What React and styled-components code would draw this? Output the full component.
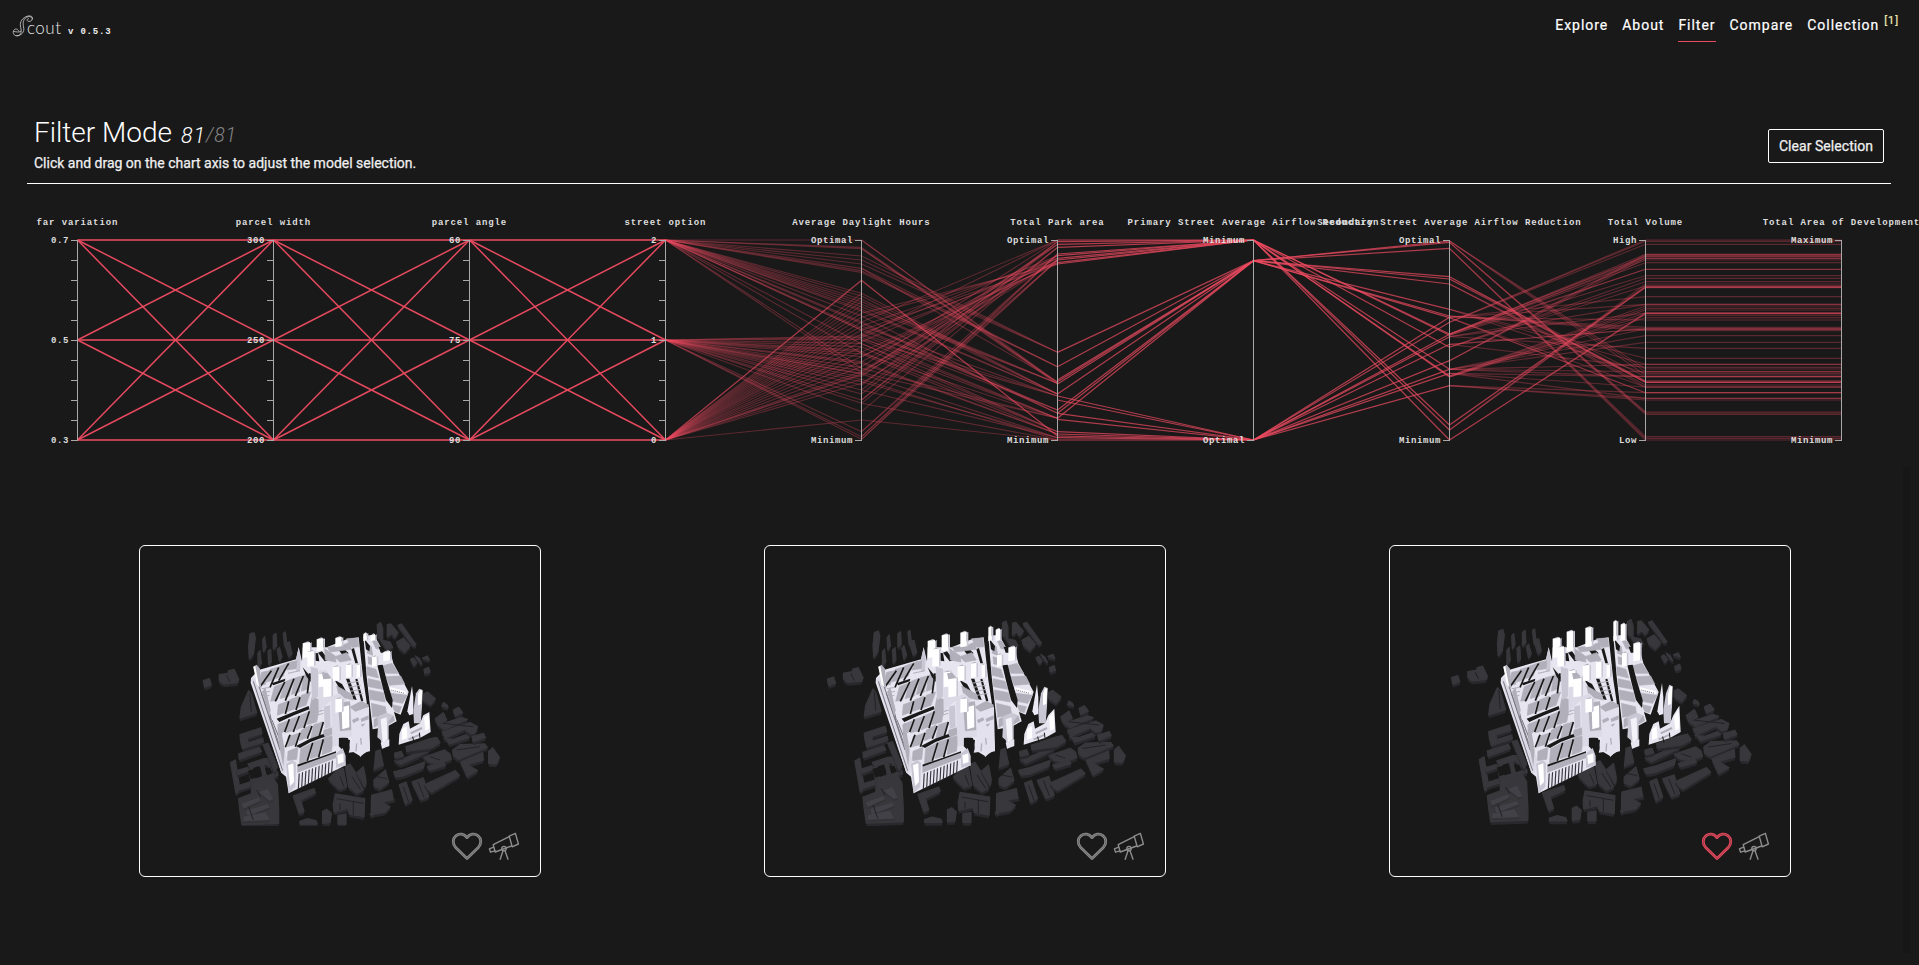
import React from "react";
import styled, { createGlobalStyle } from "styled-components";

const GlobalStyle = createGlobalStyle`
  html, body { margin: 0; padding: 0; background: #191919; }
  body { width: 1919px; height: 965px; overflow: hidden; color: #fff; font-family: Roboto, sans-serif; }
  * { box-sizing: border-box; }
`;

const Page = styled.div`
  display: flex;
  flex-direction: column;
  width: 1919px;
  height: 965px;
  overflow: hidden;
  background: #191919;
`;

const TopBar = styled.header`
  display: flex;
  justify-content: space-between;
  height: 116px;
  padding: 11px 20px 0 12px;
`;

const Brand = styled.div`
  display: flex;
  align-items: flex-start;
`;

const BrandMark = styled.svg`
  width: 22px;
  height: 28px;
  overflow: visible;
`;

const BrandName = styled.span`
  margin: 6px 0 0 -7px;
  width: 36px;
  font: 300 17px/22px Lato, sans-serif;
  letter-spacing: 0.5px;
  color: #e6e6e6;
`;

const Version = styled.span`
  margin: 13px 0 0 5px;
  font: bold 9px/16px "Liberation Mono", monospace;
  letter-spacing: 0.8px;
  color: #eee;
`;

const Nav = styled.nav`
  display: flex;
  align-items: flex-start;
  gap: 14px;
`;

const NavItem = styled.a`
  height: 31px;
  font-size: 14px;
  line-height: 28px;
  letter-spacing: 0.97px;
  font-weight: 400;
  color: #fff;
  -webkit-text-stroke: 0.2px #fff;
  border-bottom: 1px solid ${(p) => (p.$active ? "#e84a5f" : "transparent")};
`;

const Count = styled.sup`
  margin-left: 5px;
  font-size: 11px;
  line-height: 0;
  letter-spacing: 0.9px;
  color: #f3eab5;
  -webkit-text-stroke: 0.2px #f3eab5;
`;

const Heading = styled.section`
  display: flex;
  justify-content: space-between;
  height: 68px;
  margin: 0 28px 0 27px;
  padding: 0 7px;
  border-bottom: 1px solid #fff;
`;

const Title = styled.h1`
  display: flex;
  align-items: baseline;
  margin: 0;
  height: 37px;
  font-size: 28px;
  line-height: 33px;
  font-weight: 300;
`;

const Selected = styled.em`
  margin-left: 9px;
  padding-top: 1px;
  align-self: flex-start;
  line-height: 37px;
  font-size: 21.5px;
  letter-spacing: 0.9px;
`;

const Total = styled(Selected)`
  margin-left: 0;
  font-size: 19.5px;
  letter-spacing: 0.7px;
  color: #858585;
`;

const Hint = styled.p`
  margin: 0;
  font-size: 14px;
  line-height: 20px;
  font-weight: 400;
  color: #f0f0f0;
  -webkit-text-stroke: 0.25px #f0f0f0;
`;

const ClearButton = styled.button`
  width: 116px;
  height: 34px;
  margin-top: 13px;
  padding: 0;
  font: 400 14px/30px Roboto, sans-serif;
  letter-spacing: 0.05px;
  color: #f0f0f0;
  -webkit-text-stroke: 0.25px #f0f0f0;
  background: transparent;
  border: 1px solid #fff;
  border-radius: 2px;
`;

const Chart = styled.svg`
  display: block;
  width: 1919px;
  height: 283px;
  flex: none;
`;

const AxisTitle = styled.text`
  font: bold 9px "Liberation Mono", monospace;
  letter-spacing: 0.89px;
  fill: #dedede;
`;

const TickLabel = styled(AxisTitle)`
  letter-spacing: 0.6px;
`;

const Gallery = styled.main`
  display: grid;
  grid-template-columns: repeat(3, 625px);
  justify-items: center;
  height: 486px;
  margin: 0 9px 0 27px;
  padding-top: 78px;
  position: relative;
`;

const ScrollTrack = styled.div`
  position: absolute;
  right: 0;
  top: 0;
  width: 7px;
  height: 486px;
  background: #161616;
`;

const Card = styled.article`
  display: flex;
  flex-direction: column;
  width: 402px;
  height: 332px;
  padding: 64px 20px 0 50px;
  border: 1px solid #fff;
  border-radius: 6px;
`;

const Model = styled.svg`
  width: 320px;
  height: 216px;
  flex: none;
`;

const Actions = styled.div`
  display: flex;
  align-self: flex-end;
  margin-top: 4px;
  gap: 5px;
`;

const Icon = styled.svg`
  width: 32px;
  height: 32px;
  fill: none;
  stroke: ${(p) => p.$color || "#8d8d8d"};
`;

/* ---------- parallel coordinates ---------- */

const AXIS_X = [77, 273, 469, 665, 861, 1057, 1253, 1449, 1645, 1841];
const AXES = [
  { name: "far variation", top: "0.7", mid: "0.5", low: "0.3" },
  { name: "parcel width", top: "300", mid: "250", low: "200" },
  { name: "parcel angle", top: "60", mid: "75", low: "90" },
  { name: "street option", top: "2", mid: "1", low: "0" },
  { name: "Average Daylight Hours", top: "Optimal", low: "Minimum" },
  { name: "Total Park area", top: "Optimal", low: "Minimum" },
  { name: "Primary Street Average Airflow Reduction", top: "Minimum", low: "Optimal" },
  { name: "Secondary Street Average Airflow Reduction", top: "Optimal", low: "Minimum" },
  { name: "Total Volume", top: "High", low: "Low" },
  { name: "Total Area of Development", top: "Maximum", low: "Minimum" },
];

// Positions below run from 0 (top of an axis) to 600 (bottom); [from, to, overlapping models].
const factorLinks = [0, 300, 600].flatMap((a) => [0, 300, 600].map((b) => [a, b, 9]));

const daylight = {
  0: [0, 22, 26, 48, 60, 72, 85, 92, 97, 160, 168, 178, 185, 193, 200, 208, 213, 228, 245, 250, 265, 270, 270, 312, 340, 385, 398],
  300: [288, 292, 298, 310, 320, 335, 342, 350, 365, 370, 382, 392, 400, 402, 410, 418, 425, 435, 450, 462, 480, 490, 515, 575, 590, 598, 330],
  600: [120, 121, 122, 160, 172, 185, 196, 208, 220, 232, 246, 258, 270, 282, 292, 305, 320, 336, 350, 365, 380, 395, 402, 405, 418, 430, 540],
};
const daylightLinks = Object.entries(daylight).flatMap(([k, v]) => v.map((d) => [Number(k), d, 1]));

const parkLinks = [
  [[0, 22, 26], 427], [[0, 26], 432], [[48, 60, 72], 337], [[85, 92, 97], 380], [[85], 425],
  [[120, 121, 122], 588], [[160, 168, 178], 462], [[185, 193, 200], 430], [[208, 213], 462],
  [[228, 245, 250], 520], [[265, 270, 285], 510], [[292, 300, 312], 535], [[340, 385, 398], 535],
  [[310, 320, 335], 575], [[342, 365, 370], 582], [[402, 425, 450], 593], [[540, 490, 418], 600],
  [[575, 590, 598], 60], [[575, 590, 598], 42], [[435, 462, 480], 5], [[400, 410, 450], 13],
  [[480, 490, 515], 22], [[282, 350, 392], 47], [[258, 305, 365], 55], [[232, 292, 350], 68],
  [[220, 270, 336], 72], [[246, 288, 380], 0], [[395, 405, 430], 60], [[258, 282, 298], 468],
].flatMap(([from, to]) => from.map((f) => [f, to, 1]));

const airflowLinks = [
  ...[337, 380, 420, 425, 432, 462, 510, 520, 535].map((p) => [p, 62, 3]),
  ...[0, 5, 13, 22, 42, 47, 55, 60, 68, 72].map((p) => [p, 0, 3]),
  ...[468, 480, 520, 538, 575, 582, 588, 593, 600].map((p) => [p, 600, 3]),
];

const secondaryLinks = [
  ...[3, 7, 25, 110, 117, 132, 208, 228, 233].map((s) => [62, s, 3]),
  ...[282, 286, 322, 388, 408, 411, 555, 570, 600].map((s) => [0, s, 3]),
  ...[247, 232, 283, 290, 313, 362, 388, 400, 437].map((s) => [600, s, 3]),
];

const volumeLinks = [
  [3, [387, 395, 405]], [7, [516, 519, 523]], [25, [590, 595, 600]],
  [110, [423, 427, 427]], [117, [423, 427, 410]], [132, [427, 435, 441]],
  [208, [355, 373, 400]], [228, [262, 267, 272]], [233, [441, 458, 458]],
  [282, [48, 50, 88]], [286, [55, 88, 107]], [322, [115, 125, 138]],
  [388, [267, 287, 307]], [408, [198, 205, 226]], [411, [210, 219, 233]],
  [555, [140, 142, 143]], [570, [132, 138, 142]], [600, [219, 220, 221]],
  [247, [0, 4, 13]], [232, [170, 193, 240]], [283, [43, 60, 68]],
  [290, [193, 219, 325]], [313, [267, 267, 382]], [362, [43, 47, 55]],
  [388, [395, 410, 373]], [400, [410, 441, 475]], [437, [458, 475, 480]],
].flatMap(([s, v]) => v.map((x) => [s, x, 1]));

const areaLinks = volumeLinks.map(([, v]) => [v, v, 1]);

const SEGMENTS = [
  factorLinks, factorLinks, factorLinks, daylightLinks, parkLinks, airflowLinks, secondaryLinks, volumeLinks, areaLinks,
];

const toY = (v) => 56 + v / 3;

function lineStyle(a, b, n) {
  if (n === 9) return a === b ? { strokeWidth: 2, opacity: 0.76 } : { strokeWidth: 1.5, opacity: 0.95 };
  if (n === 3) return { strokeWidth: 1.2, opacity: 0.7 };
  return { strokeWidth: 1.1, opacity: 0.31 };
}

function Axis({ x, name, top, mid, low }) {
  const ticks = mid ? Array.from({ length: 11 }, (_, i) => i * 60) : [0, 600];
  const label = (v, t) => (
    <TickLabel x={x - 8} y={toY(v) + 3} textAnchor="end">{t}</TickLabel>
  );
  return (
    <g>
      <g stroke="#a8a8a8" strokeWidth="1">
        <path d={`M${x + 0.5} 56V257`} />
        {ticks.map((t) => <path key={t} d={`M${x - 6} ${toY(t) + 0.5}H${x + 1}`} />)}
      </g>
      <AxisTitle x={x + 0.4} y="41" textAnchor="middle">{name}</AxisTitle>
      {label(0, top)}
      {mid && label(300, mid)}
      {label(600, low)}
    </g>
  );
}

function ParallelChart() {
  return (
    <Chart viewBox="0 0 1919 283">
      <g stroke="#f04c62">
        {SEGMENTS.map((links, s) =>
          links.map(([a, b, n], i) => (
            <line
              key={`${s}-${i}`}
              x1={AXIS_X[s] + 0.5}
              x2={AXIS_X[s + 1] + 0.5}
              y1={toY(a)}
              y2={toY(b)}
              {...lineStyle(a, b, n)}
            />
          ))
        )}
      </g>
      {AXES.map((a, i) => <Axis key={a.name} x={AXIS_X[i]} {...a} />)}
    </Chart>
  );
}

/* ---------- city model ---------- */

const parse = (s) => s.split(" ").map((p) => p.split(",").map(Number));
const str = (pts) => pts.map((p) => p.join(",")).join(" ");

function Block({ pts, h = 8, top, side, grow = 0 }) {
  const p = parse(pts);
  return (
    <g strokeLinejoin="round">
      {p.map((a, i) => {
        const b = p[(i + 1) % p.length];
        return <polygon key={i} fill={side} points={str([a, b, [b[0], b[1] + h], [a[0], a[1] + h]])} />;
      })}
      <polygon fill={top} stroke={top} strokeWidth={grow} points={pts} />
    </g>
  );
}

const CONTEXT = [
  "180,72 192,68 196,84 190,132 178,146 176,110", "218,88 224,80 228,112 220,124", "250,76 258,70 260,108 250,116",
  "280,70 286,66 290,100 284,110", "204,130 210,122 214,160 204,172", "234,124 242,118 244,156 236,164",
  "262,120 268,112 276,140 268,152", "284,100 298,96 306,132 296,140",
  "40,212 58,206 64,224 44,232", "88,194 114,190 116,182 132,178 146,208 142,218 100,222 88,212",
  "176,242 184,252 200,308 150,324 154,292",
  "150,374 212,354 216,370 172,384 174,398 218,384 220,396 158,416 152,394", "146,432 208,412 214,424 148,448",
  "122,458 136,450 150,540 138,550", "140,482 174,472 176,482 144,494", "174,462 222,446 248,446 256,474 240,480 232,462 184,478",
  "148,526 180,516 184,528 146,540", "176,478 188,476 196,512 184,520", "212,466 220,464 230,500 220,506", "190,510 262,486 264,496 194,522",
  "220,404 234,400 262,470 254,486",
  "146,566 184,552 186,520 250,504 262,524 266,600 266,640 156,644 150,604",
  "310,558 372,536 376,548 332,570 342,604 328,610", "330,634 352,626 378,632 382,642 330,642", "398,604 410,598 424,610 420,638 398,640",
  "444,616 468,612 468,642 444,642",
  "436,552 524,566 522,620 478,612 474,596 432,606 430,582",
  "416,506 444,478 460,476 470,530 448,538 436,528", "466,468 480,462 494,484 520,540 500,550 476,530", "500,488 520,470 530,520 524,530",
  "540,430 570,420 580,466 550,478", "552,510 586,480 596,516 570,536 552,528",
  "544,556 606,540 614,568 574,576 600,590 586,606 544,614",
  "610,486 642,478 704,456 700,474 640,498 618,500", "700,442 764,420 780,432 784,448 744,462 716,456",
  "614,452 640,446 700,420 698,408 720,404 716,424 632,464", "648,410 720,386 740,382 750,398 724,414 650,424",
  "628,524 648,516 666,570 646,582", "666,516 700,504 716,560 692,570", "704,524 796,482 808,496 726,546 716,540",
  "736,326 760,308 770,330 744,344", "746,346 814,322 832,328 764,358", "756,366 840,338 862,350 856,368 842,372 824,358 762,386 790,388 828,374 838,382 778,402",
  "788,420 810,404 884,402 892,412 806,448 790,438", "846,380 880,370 886,382 850,396", "812,456 878,428 880,450 832,464 862,482 832,500",
  "896,424 908,414 928,442 920,462 896,460", "760,278 770,284 774,292 756,288", "700,252 712,246 736,266 722,284 700,270",
  "790,300 806,292 818,308 796,318", "698,144 712,138 718,150", "702,178 716,172 720,186 704,190",
  "662,148 670,144 680,158 672,166", "676,138 688,146 696,162 690,158",
  "624,46 634,42 678,104 670,108", "592,44 602,42 624,68 614,82 604,70 592,80", "620,96 640,84 660,108 644,126 626,112",
  "562,44 572,38 578,56 578,88 564,84", "572,90 600,96 608,112 590,118", "540,612 548,610 548,618",
  "612,430 634,424 640,438 616,444", "712,470 760,456 766,466 720,480",
];

const CUTS = [
  "174,482 194,476 200,502 182,508", "190,474 208,468 214,488 196,492", "226,476 240,472 246,490 232,496",
];

const BRIGHT_CONTEXT = [
  "154,582 206,562 212,572 160,596", "168,602 232,582 240,592 172,618", "206,546 234,536 250,568 238,572", "160,620 226,606 240,630 160,634",
];

const ROOFS = [
  "215,187 237,182 226,224 206,224", "240,178 262,172 250,210 230,216", "267,169 292,160 280,198 256,206", "297,157 320,152 318,176 290,180",
  "253,230 278,220 262,270 242,274", "284,216 308,206 298,258 270,266", "314,204 336,198 328,246 304,254", "340,196 360,190 356,236 334,244",
  "265,284 292,274 282,308 262,316", "298,270 328,258 316,296 288,306", "334,256 362,246 348,286 322,294", "366,262 392,270 392,304 356,312",
  "268,342 292,332 284,362 276,370", "300,328 323,320 312,362 286,368", "330,316 354,306 342,350 318,360", "360,302 388,294 380,336 350,344",
  "294,380 326,370 314,404 292,410", "334,360 363,344 352,382 328,392", "371,344 398,336 388,376 362,386", "402,360 430,352 430,372 398,384",
  "294,424 324,412 320,448 292,452", "332,416 364,400 352,452 328,464", "370,396 396,388 386,438 360,446", "402,384 432,376 424,424 396,434",
];

const RIGHT_ROOFS = [
  "530,170 558,178 566,204 532,196", "534,206 570,214 578,238 536,230", "538,240 580,248 586,276 540,268",
  "544,280 586,290 590,314 548,322", "576,168 606,160 626,190 588,190", "588,200 632,198 644,222 598,226",
  "602,250 652,256 638,280 606,274", "606,284 634,290 628,308 614,304", "546,90 562,94 574,118 558,116",
  "412,112 452,108 480,96 484,118 420,126", "434,140 470,128 484,150 450,156", "470,86 504,84 506,110 486,112",
  "440,228 484,252 490,270 448,260", "404,116 436,138 438,156 406,150", "566,320 610,318 614,332 590,346 566,344",
  "530,100 544,110 548,136 532,130", "534,140 548,144 552,164 536,162", "552,328 562,322 564,346 552,352",
];

const GAPS = [
  "244,182 212,228", "266,172 240,232", "296,160 266,212", "284,216 256,274", "312,206 286,272", "340,198 316,258",
  "360,190 352,250", "296,274 286,312", "330,262 318,300", "328,318 310,366", "358,304 342,354", "330,368 316,410",
  "366,348 352,386", "400,336 388,378", "368,398 352,452", "400,388 386,442", "300,374 286,412", "298,328 284,366",
];

// x, y, width, height of the lit face, and how far the tower grows with the floor area ratio
const TOWERS = [
  [338, 100, 22, 44, 0.6], [380, 88, 20, 36, 1], [436, 84, 19, 28, 1.3], [352, 126, 20, 44, 0.6], [520, 72, 10, 22, 1.6],
  [542, 76, 13, 18, 1.4], [580, 126, 20, 28, 1.1], [546, 142, 14, 28, 0.5], [428, 172, 20, 42, 0.2], [468, 166, 16, 38, 0.4],
  [500, 166, 10, 38, 0], [386, 192, 20, 40, 0.4], [400, 208, 24, 54, 0.3], [436, 268, 20, 40, 0],
];

function City({ lift }) {
  const wall = "#e7e5f0";
  const roof = "#b0afba";
  const shade = "#c9c7d4";
  const dark = "#191919";
  const spread = 1 + lift * 0.0005;
  return (
    <Model viewBox="0 0 960 648">
      <g transform={`translate(${480 * (1 - spread)} ${-lift * 0.4}) scale(${spread} 1)`}>
        {CONTEXT.map((p) => <Block key={p} pts={p} h={10} grow={4} top="#38373b" side="#29282c" />)}
        {CUTS.map((p) => <polygon key={p} points={p} fill={dark} />)}
        {BRIGHT_CONTEXT.map((p) => <Block key={p} pts={p} h={6} top="#424148" side="#333237" />)}
        <g stroke="#232225" strokeWidth="3">
          <path d="M440 566L520 580M450 580V600M490 574V614M640 530L656 576M684 516L702 562M560 500L590 506M450 500L462 530M486 500L512 540M640 470L700 448M760 340L850 350M800 420L870 410M720 440L750 450M180 250L184 306M110 196L120 216M200 540L212 560M176 590L190 630" />
        </g>
      </g>

      <polygon fill={dark} points="500,84 524,84 556,420 534,648 524,648 534,430" />
      <polygon fill={dark} points="596,410 616,400 606,470 624,560 612,570 594,470" />

      <polygon
        fill={wall}
        points="183,204 206,180 318,148 326,112 336,154 338,112 410,112 470,88 506,82 520,210 530,276 540,420 510,438 480,420 474,384 446,380 446,408 462,426 467,466 296,550 288,500 274,488 182,218"
      />
      <polygon fill={shade} points="326,112 332,146 330,184 318,182 318,150" />
      <g fill={roof} stroke={roof} strokeWidth="2">
        {ROOFS.map((p) => <polygon key={p} points={p} />)}
      </g>
      <g stroke={dark} strokeWidth="5">
        {GAPS.map((g) => <path key={g} d={`M${g.replace(" ", "L")}`} />)}
      </g>
      <g fill={dark}>
        <polygon points="260,326 310,306 356,288 358,298 312,316 268,336" />
        <polygon points="318,408 360,386 400,372 404,380 362,396 330,414" />
        <polygon points="244,220 286,206 284,214 250,226" />
        <polygon points="322,464 392,440 438,424 438,430 390,450 324,472" />
        <polygon points="338,172 362,200 362,216 350,200" />
        <polygon points="384,128 396,124 416,150 404,154" />
        <polygon points="434,210 456,222 478,262 462,260" />
        <polygon points="468,206 478,206 500,270 490,268" />
        <polygon points="496,208 502,206 520,272 514,276" />
        <polygon points="372,128 384,130 388,154 376,152" />
        <polygon points="446,120 462,116 476,130 458,136" />
        <polygon points="484,118 492,114 504,160 496,160" />
        <polygon points="446,384 480,390 476,430 464,424 458,402" />
      </g>
      <g stroke={roof} strokeWidth="3">
        <path d="M470 220L506 214M474 232L512 226M480 244L514 238M486 256L518 250M216 236L240 232M220 248L240 244M224 260L238 256M404 400L430 390M404 412L428 402M292 172L320 166M294 190L330 182M366 320L400 310M380 306L402 300" />
      </g>
      <g stroke="#34333a" strokeWidth="3.4">
        {Array.from({ length: 11 }, (_, i) => (
          <path key={i} d={`M${328 + i * 10} ${484 - i * 4.6}L${325 + i * 10} ${538 - i * 5}`} />
        ))}
      </g>
      <polygon fill={roof} points="322,470 438,428 438,446 322,490" />
      <polygon fill={wall} points="322,488 438,444 438,448 322,493" />

      <polygon fill="#dcdae6" points="183,206 200,200 236,310 272,390 292,450 284,490 274,488" />
      <g stroke="#77767f" strokeWidth="3" fill="none">
        <path d="M190 214L278 482M206 226L280 440M222 240L244 330M246 330L274 400M214 250L270 420" />
      </g>
      <polygon fill={roof} points="190,170 200,164 210,176 214,238 204,226" />
      <polygon fill="#fff" points="190,170 196,168 208,232 200,222" />
      <polygon fill={roof} points="216,246 226,232 242,300 238,320" />
      <polygon fill={roof} points="262,344 270,338 284,420 280,470 266,400" />
      <polygon fill={shade} points="288,462 306,450 318,458 316,530 296,550" />
      <polygon fill="#fff" points="294,466 310,460 312,516 300,528" />
      <polygon fill={shade} points="438,430 458,414 467,438 467,466 438,474" />
      <polygon fill="#fff" points="442,436 460,430 461,456 444,462" />

      <polygon fill={wall} points="520,78 552,74 580,126 602,128 610,160 656,246 632,314 612,306 620,334 590,350 548,358 530,200" />
      <g fill={roof} stroke={roof} strokeWidth="2">
        {RIGHT_ROOFS.map((p) => <polygon key={p} points={p} />)}
      </g>
      <polygon fill={dark} points="562,166 578,164 590,210 608,270 606,294 588,270 574,216" />
      <polygon fill={dark} points="524,88 540,108 538,124 528,118" />
      <polygon fill={dark} points="566,110 578,112 584,128 572,128" />
      <path d="M600 236L648 248" stroke="#fff" strokeWidth="8" />
      <path d="M604 240L644 250" stroke="#85848f" strokeWidth="3" strokeDasharray="3 3" />

      <polygon fill={shade} points="362,170 384,176 384,260 366,270" />
      <polygon fill="#dcdae6" points="384,182 410,180 428,260 424,270 402,290 386,306" />
      <polygon fill={shade} points="402,290 420,286 422,352 404,356" />
      <polygon fill="#dcdae6" points="422,262 448,250 484,284 486,380 446,384 446,406 428,410" />
      <polygon fill={roof} points="444,280 480,274 484,360 450,364" />
      <polygon fill="#fff" points="455,292 477,286 478,352 457,358" />
      <polygon fill={roof} points="480,290 514,272 536,284 536,292 496,306 484,296" />
      <polygon fill="#e3e1ed" points="484,296 496,306 537,290 540,424 526,426 510,442 508,424 476,428 486,390" />
      <polygon fill={roof} points="486,330 504,322 508,330 490,340" />
      <polygon fill={roof} points="512,326 536,316 536,328 514,336" />
      <polygon fill={roof} points="512,344 526,340 518,350" />
      <path d="M500 400L498 424M512 384L514 404" stroke={roof} strokeWidth="4" />

      {TOWERS.map(([x, y, w, h, k]) => {
        const t = y - lift * k;
        return (
          <g key={`${x}-${y}`}>
            <polygon fill={roof} points={`${x},${t} ${x + w * 0.7},${t - 6} ${x + w},${t - 3} ${x + w},${t + 2}`} />
            <polygon fill={shade} points={`${x + w},${t} ${x + w + 5},${t - 3} ${x + w + 5},${y + h - 4} ${x + w},${y + h - 2}`} />
            <polygon fill="#fff" points={`${x},${t} ${x + w},${t - 3} ${x + w},${y + h - 3} ${x},${y + h}`} />
          </g>
        );
      })}
      <polygon fill={roof} points="396,190 412,188 424,204 400,208" />

      <polygon fill={shade} points="566,318 590,308 610,316 596,334 596,402 578,416 572,390 562,382" />
      <polygon fill="#f3f2f9" points="572,328 590,322 592,388 578,398" />
      <polygon fill={wall} points="572,398 598,388 598,408 576,416" />
      <polygon fill="#eceaf4" points={`652,304 666,${228 - lift * 0.4} 670,262 670,312 658,316`} />
      <polygon fill={shade} points={`678,250 688,${236 - lift * 0.5} 698,${240 - lift * 0.5} 696,290 692,340 672,340 670,300`} />
      <polygon fill="#fff" points={`684,252 690,${240 - lift * 0.5} 697,${242 - lift * 0.5} 694,282 684,286`} />
      <polygon fill={wall} points={`628,372 640,342 656,334 660,356 690,340 700,316 718,${306 - lift * 0.8} 722,366 690,384 626,404`} />
      <polygon fill="#fff" points={`702,322 716,${312 - lift * 0.7} 718,356 706,362`} />
      <polygon fill="#fff" points="636,358 650,348 652,384 636,390" />
      <path d="M662 370L696 354M656 388L690 374" stroke={roof} strokeWidth="6" />
      <path d="M668 380L672 398M688 368L690 384" stroke={dark} strokeWidth="3" />
    </Model>
  );
}

function Heart({ color }) {
  const d = "M16 28.6 4.7 17.4C1.2 13.8 1.6 8.6 4.9 5.8 8.5 2.9 13.3 3.9 16 7.6 18.7 3.9 23.5 2.9 27.1 5.8 30.4 8.6 30.8 13.8 27.3 17.4Z";
  return (
    <Icon viewBox="0 0 32 32" $color={color}>
      <path d={d} strokeWidth="2.8" strokeLinejoin="round" />
      <path d={d} strokeWidth="0.8" stroke="#191919" opacity="0.45" />
    </Icon>
  );
}

function Telescope() {
  return (
    <Icon viewBox="0 0 32 32">
      <g strokeWidth="1.4" strokeLinejoin="round" strokeLinecap="round">
        <path d="M21.2 6.1 27.4 3.4 30.4 14 24.2 16.8Z" />
        <path d="M21.2 6.6 5.2 14.6 7.2 22 23.6 16" />
        <path d="M5.6 17.2 1.4 18.8 2.6 22.2 6.8 20.8" />
        <circle cx="16" cy="18.6" r="2.2" />
        <path d="M15 20.8 12.2 29.2M17 20.8 20 29.2" />
      </g>
    </Icon>
  );
}

const NAV = ["Explore", "About", "Filter", "Compare", "Collection"];
const CARDS = [
  { id: "a", lift: 0, liked: false },
  { id: "b", lift: 12, liked: false },
  { id: "c", lift: 23, liked: true },
];

export default function App() {
  return (
    <Page>
      <GlobalStyle />
      <TopBar>
        <Brand>
          <BrandMark viewBox="0 0 22 28" fill="none" stroke="#cfcfcf" strokeWidth="0.8">
            <path d="M20 8.5C22 5 17 3.5 12.5 6.5C7.5 10 8 14 9 18C10 23 7 25.5 4 24.8C1 24 .7 21 2 19C4 16.8 6 18.5 7 20.5" />
            <path d="M17 10.5C21.5 10 21.5 5.5 16.5 5.5C11.5 7 10.5 11 11.5 16C13 21 9 25 4.5 24.5" />
            <path d="M17 10.5C14.5 10 14.5 8 17 7.5M1.5 20.5C4 20.5 7 22 9 20" />
          </BrandMark>
          <BrandName>cout</BrandName>
          <Version>v 0.5.3</Version>
        </Brand>
        <Nav>
          {NAV.map((n) => (
            <NavItem key={n} $active={n === "Filter"}>
              {n}
              {n === "Collection" && <Count>[1]</Count>}
            </NavItem>
          ))}
        </Nav>
      </TopBar>
      <Heading>
        <div>
          <Title>
            Filter Mode <Selected>81</Selected><Total>/81</Total>
          </Title>
          <Hint>Click and drag on the chart axis to adjust the model selection.</Hint>
        </div>
        <ClearButton>Clear Selection</ClearButton>
      </Heading>
      <ParallelChart />
      <Gallery>
        {CARDS.map((c) => (
          <Card key={c.id}>
            <City lift={c.lift} />
            <Actions>
              <Heart color={c.liked ? "#e84a5f" : undefined} />
              <Telescope />
            </Actions>
          </Card>
        ))}
        <ScrollTrack />
      </Gallery>
    </Page>
  );
}
